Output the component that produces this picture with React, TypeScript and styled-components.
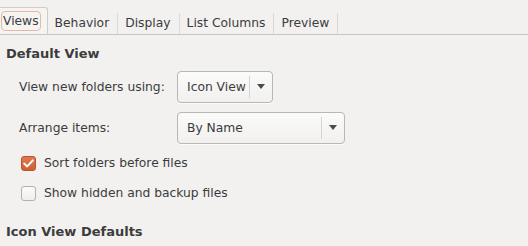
import styled, { createGlobalStyle } from "styled-components";

const GlobalStyle = createGlobalStyle`
  html, body {
    margin: 0;
    padding: 0;
    background: #f2f1f0;
  }
  body {
    font-family: "DejaVu Sans", sans-serif;
    font-size: 12px;
    color: #3c3c3c;
  }
`;

const Page = styled.div`
  width: 528px;
  height: 246px;
  overflow: hidden;
  background: #f2f1f0;
`;

const TabBar = styled.div`
  display: flex;
  align-items: flex-end;
  height: 34px;
  border-bottom: 1px solid #c8c6c3;
`;

const Tab = styled.div<{ $active?: boolean }>`
  height: ${(p) => (p.$active ? "26px" : "17px")};
  display: flex;
  align-items: ${(p) => (p.$active ? "center" : "flex-end")};
  padding: ${(p) => (p.$active ? "0 6px 0 1px" : "0 8px 4px 7px")};
  border-right: 1px solid ${(p) => (p.$active ? "#cfcdca" : "#dcdad7")};
  border-top: ${(p) => (p.$active ? "1px solid #cfcdca" : "none")};
  border-radius: ${(p) => (p.$active ? "0 3px 0 0" : "0")};
  background: ${(p) => (p.$active ? "#f5f4f3" : "transparent")};
  white-space: nowrap;
  font-size: 12.3px;
`;

const FocusLabel = styled.span`
  padding: 2px 1px;
  border: 1px solid #e4b8a6;
  border-radius: 4px;
`;

const Content = styled.div`
  padding: 10px 6px 0 6px;
`;

const Heading = styled.div<{ $gap?: number }>`
  font-weight: bold;
  font-size: 13px;
  height: 18px;
  line-height: 18px;
  margin-top: ${(p) => p.$gap ?? 0}px;
`;

const Row = styled.div<{ $gap?: number }>`
  display: grid;
  grid-template-columns: 158px auto;
  align-items: center;
  padding-left: 13px;
  height: 41px;
  font-size: 12.3px;
  margin-top: ${(p) => p.$gap ?? 0}px;
`;

const Combo = styled.div<{ $width: number }>`
  width: ${(p) => p.$width}px;
  height: 32px;
  box-sizing: border-box;
  border: 1px solid #b9b7b4;
  border-radius: 4px;
  background: linear-gradient(#fbfbfa, #f1f0ef);
  display: flex;
  align-items: center;
  box-shadow: 0 1px 0 rgba(255, 255, 255, 0.7);
`;

const ComboText = styled.span`
  flex: 1;
  padding-left: 9px;
`;

const ComboArrow = styled.span`
  width: 22px;
  height: 22px;
  border-left: 1px solid #d6d4d1;
  display: flex;
  align-items: center;
  justify-content: center;
`;

const CheckRow = styled.label`
  display: flex;
  align-items: center;
  gap: 8px;
  padding-left: 15px;
  height: 30px;
  font-size: 12.3px;
`;

const Box = styled.span<{ $checked?: boolean }>`
  width: 15px;
  height: 15px;
  box-sizing: border-box;
  border-radius: 3px;
  border: 1px solid ${(p) => (p.$checked ? "#b8552d" : "#b2b0ad")};
  background: ${(p) =>
    p.$checked ? "linear-gradient(#e07a4e, #cd5f31)" : "linear-gradient(#fbfbfa, #efeeed)"};
  display: flex;
  align-items: center;
  justify-content: center;
`;

const Arrow = () => (
  <svg width="8" height="5" viewBox="0 0 8 5">
    <path d="M0 0 L8 0 L4 5 Z" fill="#4a4a4a" />
  </svg>
);

const Check = () => (
  <svg width="11" height="9" viewBox="0 0 11 9">
    <path d="M1.2 4.6 L4.2 7.4 L9.8 1.4" stroke="#fff" strokeWidth="2" fill="none" strokeLinecap="round" strokeLinejoin="round" />
  </svg>
);

export default function App() {
  return (
    <Page>
      <GlobalStyle />
      <TabBar>
        <Tab $active>
          <FocusLabel>Views</FocusLabel>
        </Tab>
        <Tab>Behavior</Tab>
        <Tab>Display</Tab>
        <Tab>List Columns</Tab>
        <Tab>Preview</Tab>
      </TabBar>
      <Content>
        <Heading>Default View</Heading>
        <Row $gap={3}>
          <span>View new folders using:</span>
          <Combo $width={96}>
            <ComboText>Icon View</ComboText>
            <ComboArrow>
              <Arrow />
            </ComboArrow>
          </Combo>
        </Row>
        <Row>
          <span>Arrange items:</span>
          <Combo $width={168}>
            <ComboText>By Name</ComboText>
            <ComboArrow>
              <Arrow />
            </ComboArrow>
          </Combo>
        </Row>
        <CheckRow>
          <Box $checked>
            <Check />
          </Box>
          Sort folders before files
        </CheckRow>
        <CheckRow>
          <Box />
          Show hidden and backup files
        </CheckRow>
        <Heading $gap={15}>Icon View Defaults</Heading>
      </Content>
    </Page>
  );
}
